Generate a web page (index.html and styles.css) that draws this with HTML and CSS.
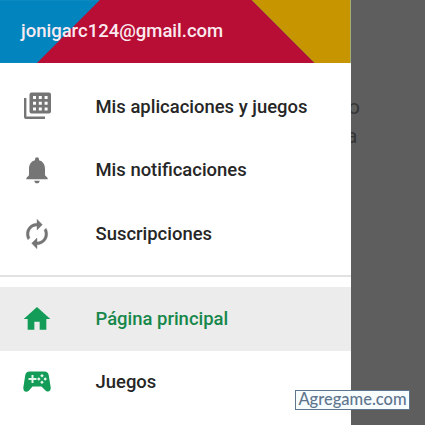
FILE: index.html
```html
<!DOCTYPE html>
<html lang="es">
<head>
<meta charset="utf-8">
<title>Menú</title>
<link rel="stylesheet" href="styles.css">
</head>
<body>
<div class="screen">
  <aside class="drawer">
    <header class="account">
      <svg class="account-bg" viewBox="0 0 351 63" aria-hidden="true">
        <rect width="351" height="63" fill="#0285bf"/>
        <path d="M100 0H252L315 63H37Z" fill="#b80d34"/>
        <path d="M252 0H351V63H315Z" fill="#c79500"/>
      </svg>
      <span class="email">jonigarc124@gmail.com</span>
    </header>
    <nav class="group">
      <a class="item">
        <svg class="icon" viewBox="0 0 32 32"><path fill-rule="evenodd" d="M10.500 1.500H28Q30 1.500 30 3.500V20.500Q30 22.500 28 22.500H10.500Q8.500 22.500 8.500 20.500V3.500Q8.500 1.500 10.500 1.500ZM12 5v3h3v-3ZM17.800 5v3h3v-3ZM23.600 5v3h3v-3ZM12 10.700v3h3v-3ZM17.800 10.700v3h3v-3ZM23.600 10.700v3h3v-3ZM12 16.400v3h3v-3ZM17.800 16.400v3h3v-3ZM23.600 16.400v3h3v-3Z"/><path d="M3 7h2.400v18.600H24V28H5Q3 28 3 26Z"/></svg>
        <span>Mis aplicaciones y juegos</span>
      </a>
      <a class="item">
        <svg class="icon" viewBox="0 0 24 24"><path d="M12 22c1.100 0 2-.9 2-2h-4c0 1.100.9 2 2 2zm6-6v-5c0-3.070-1.640-5.640-4.500-6.320V4c0-.83-.67-1.500-1.500-1.500s-1.500.67-1.500 1.500v.68C7.630 5.360 6 7.920 6 11v5l-2 2v1h16v-1l-2-2z"/></svg>
        <span>Mis notificaciones</span>
      </a>
      <a class="item">
        <svg class="icon icon-sync" viewBox="0 0 24 24"><path d="M12 6v3l4-4-4-4v3c-4.420 0-8 3.580-8 8 0 1.570.46 3.030 1.240 4.260L6.700 14.800c-.45-.83-.7-1.790-.7-2.800 0-3.310 2.690-6 6-6zm6.760 1.740L17.300 9.200c.44.84.7 1.790.7 2.800 0 3.310-2.690 6-6 6v-3l-4 4 4 4v-3c4.420 0 8-3.580 8-8 0-1.570-.46-3.030-1.240-4.260z"/></svg>
        <span>Suscripciones</span>
      </a>
    </nav>
    <nav class="group group-store">
      <a class="item item-active">
        <svg class="icon icon-green" viewBox="0 0 24 24"><path d="M10 20v-6h4v6h5v-8h3L12 3 2 12h3v8z"/></svg>
        <span>Página principal</span>
      </a>
      <a class="item">
        <svg class="icon icon-green" viewBox="0 0 32 32"><path d="M8.500 5.500H23.500Q27 5.500 27.700 9L29.700 21.500C30 25.800 26.500 26.800 24 24L20.500 20.500H11.500L8 24.500C5.500 26.800 2 25.800 2.300 21.500L4.300 9Q5 5.500 8.500 5.500Z"/><path class="cutout" d="M10.500 9h2v3h3v2h-3v3h-2v-3h-3v-2h3ZM21 8l1.800 1.800-1.800 1.800-1.800-1.800ZM21 14.400l1.800 1.800-1.800 1.800-1.800-1.800ZM17.800 11.200l1.800 1.800-1.800 1.800-1.800-1.800ZM24.200 11.200l1.800 1.800-1.800 1.800-1.800-1.800Z"/></svg>
        <span>Juegos</span>
      </a>
    </nav>
  </aside>
  <main class="backdrop"><p>o</p><p>a</p></main>
  <div class="badge">Agregame.com</div>
</div>
</body>
</html>
```
FILE: styles.css
```css
* { box-sizing: border-box; }
body { margin: 0; }
.screen {
  position: relative;
  display: flex;
  width: 425px;
  height: 425px;
  overflow: hidden;
  background: #5e5e5e;
  font-family: Roboto, "Liberation Sans", sans-serif;
}
.drawer {
  position: relative;
  z-index: 1;
  width: 350.5px;
  flex: none;
  background: #fff;
}
.account {
  position: relative;
  display: flex;
  align-items: center;
  height: 63px;
  padding: 0 0 2px 21px;
}
.account-bg {
  position: absolute;
  inset: 0;
  width: 100%;
  height: 63px;
}
.email {
  position: relative;
  color: #fbeaf0;
  font-size: 18.5px;
  font-weight: 500;
}
.group { padding-top: 12px; }
.group-store {
  margin-top: 9.5px;
  padding-top: 10px;
  border-top: 2px solid #e2e2e2;
}
.item {
  display: flex;
  align-items: center;
  gap: 42.5px;
  height: 63.5px;
  padding-left: 21px;
  color: #262626;
  font-size: 18.45px;
  font-weight: 500;
  white-space: nowrap;
}
.item-active {
  background: #ececec;
  color: #16874a;
}
.icon {
  width: 32px;
  height: 32px;
  flex: none;
  fill: #757575;
}
.icon-sync {
  stroke: #757575;
  stroke-width: .3;
}
.icon-green { fill: #129c57; }
.cutout { fill: #e4f6ec; }
.backdrop {
  padding-top: 93px;
  margin-left: -2.5px;
  color: #353535;
  font-size: 21px;
  line-height: 29px;
}
.backdrop p { margin: 0; }
.backdrop p + p { margin-left: -2px; }
.badge {
  position: absolute;
  z-index: 2;
  left: 295px;
  top: 390px;
  width: 115px;
  height: 20px;
  border: 1px solid #60758c;
  background: #f7fcff;
  color: #60758c;
  font: 500 16.5px/17px Lato, sans-serif;
  text-align: center;
}
```
